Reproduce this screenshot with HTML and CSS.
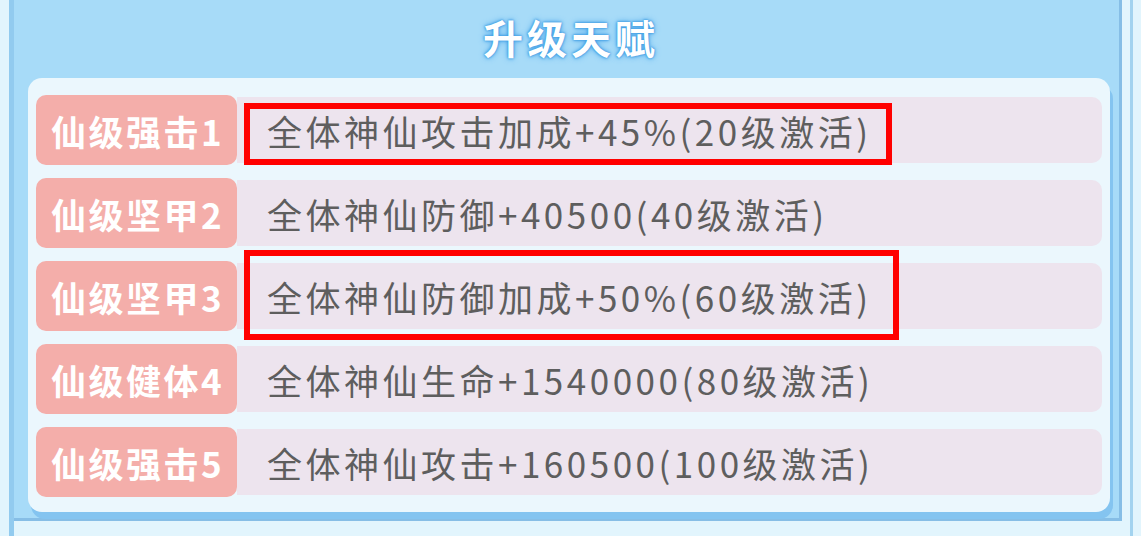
FILE: index.html
```html
<!DOCTYPE html>
<html lang="zh-CN">
<head>
  <meta charset="UTF-8">
  <meta name="viewport" content="width=device-width, initial-scale=1.0">
  <title>升级天赋</title>
  <link rel="stylesheet" href="styles.css">
</head>
<body>
  <div class="window">
    <div class="card">
      <div class="title">升级天赋</div>

      <div class="panel">
        <div class="row">
          <div class="tag">仙级强击1</div>
          <div class="desc">
            全体神仙攻击加成+45%(20级激活)
            <span class="mark mark-1"></span>
          </div>
        </div>
        <div class="row">
          <div class="tag">仙级坚甲2</div>
          <div class="desc">全体神仙防御+40500(40级激活)</div>
        </div>
        <div class="row">
          <div class="tag">仙级坚甲3</div>
          <div class="desc">
            全体神仙防御加成+50%(60级激活)
            <span class="mark mark-3"></span>
          </div>
        </div>
        <div class="row">
          <div class="tag">仙级健体4</div>
          <div class="desc">全体神仙生命+1540000(80级激活)</div>
        </div>
        <div class="row">
          <div class="tag">仙级强击5</div>
          <div class="desc">全体神仙攻击+160500(100级激活)</div>
        </div>
      </div>
    </div>
  </div>
</body>
</html>
```

FILE: styles.css
```css
body {
  margin: 0;
  height: 536px;
  overflow: hidden;
  background-color: #e2f5fd;
  font-family: "Noto Sans CJK SC", "Noto Sans", sans-serif;
}
.window {
  margin-left: 9px;
  width: 1124px;
  height: 536px;
  box-sizing: border-box;
  border-left: 5px solid #92cbef;
  border-right: 3px solid #a3d3ef;
  padding-right: 8px;
}
.card {
  background-color: #a7dbf8;
  padding: 0 9px 6px 14px;
  border-right: 3px solid #86bee6;
  border-bottom: 3px solid #86bee6;
}
.title {
  height: 78px;
  display: flex;
  align-items: center;
  justify-content: center;
  color: #fff;
  font-size: 40px;
  font-weight: 700;
  letter-spacing: 4px;
  padding: 0 0 4px 4px;
  box-sizing: border-box;
  text-shadow: 0 0 3px #3b9be2, 0 0 6px #4aa6ea, 0 0 2px #2d8fdc;
}
.panel {
  background-color: #ebf7fd;
  border-radius: 14px;
  padding: 17px 8px 15px 8px;
  display: flex;
  flex-direction: column;
  gap: 13px;
  box-shadow: 3px 7px 0 #84c4f0;
}
.row {
  display: flex;
  align-items: center;
  height: 70px;
}
.tag {
  width: 201px;
  height: 70px;
  flex-shrink: 0;
  display: flex;
  align-items: center;
  justify-content: center;
  padding-left: 2px;
  box-sizing: border-box;
  background-color: #f4aeaa;
  border-radius: 10px;
  color: #fff;
  font-size: 35px;
  font-weight: 700;
  letter-spacing: 2.5px;
}
.desc {
  position: relative;
  flex: 1;
  height: 66px;
  display: flex;
  align-items: center;
  padding-left: 30px;
  background-color: #ede4ee;
  border-radius: 0 10px 10px 0;
  color: #5e5e5e;
  font-size: 35px;
  letter-spacing: 3.5px;
  white-space: nowrap;
}
.mark {
  position: absolute;
  border: 6px solid #ff0000;
  box-sizing: border-box;
}
.mark-1 {
  left: 7px;
  top: 6px;
  width: 648px;
  height: 62px;
}
.mark-3 {
  left: 7px;
  top: -13px;
  width: 655px;
  height: 90px;
}
```
